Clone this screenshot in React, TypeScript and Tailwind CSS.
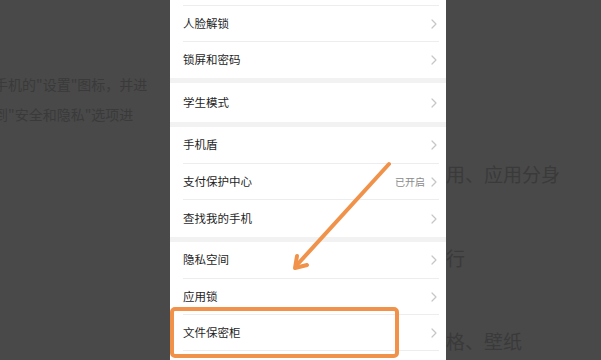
import React from "react";

type Row = { label: string; h: number; value?: string; divider?: boolean };

const sections: Row[][] = [
  [
    { label: "人脸解锁", h: 35, divider: true },
    { label: "锁屏和密码", h: 36 },
  ],
  [{ label: "学生模式", h: 39 }],
  [
    { label: "手机盾", h: 36, divider: true },
    { label: "支付保护中心", h: 35, value: "已开启", divider: true },
    { label: "查找我的手机", h: 37 },
  ],
  [
    { label: "隐私空间", h: 36, divider: true },
    { label: "应用锁", h: 35, divider: true },
    { label: "文件保密柜", h: 35, divider: true },
  ],
];

const Chevron = () => (
  <svg width="6" height="10" viewBox="0 0 6 10" fill="none">
    <path d="M1 1l4 4-4 4" stroke="#c6c6c6" strokeWidth="1.2" strokeLinecap="round" strokeLinejoin="round" />
  </svg>
);

const SettingRow = ({ row }: { row: Row }) => (
  <div className="bg-white">
    <div className="flex items-center pl-[13px] pr-[9px]" style={{ height: row.h }}>
      <span className="flex-1 text-[11.5px] text-[#1f1f1f]">{row.label}</span>
      {row.value && <span className="mr-[6px] text-[10px] text-[#8a8a8a]">{row.value}</span>}
      <Chevron />
    </div>
    {row.divider && <div className="ml-[13px] mr-[7px] h-px bg-[#ededed]" />}
  </div>
);

export default function App() {
  return (
    <div
      className="relative flex h-[360px] w-[601px] overflow-hidden bg-[#494949]"
      style={{ fontFamily: '"Noto Sans CJK SC", "Noto Sans", sans-serif' }}
    >
      {/* background article, dimmed */}
      <div className="w-[170px] shrink-0 overflow-hidden pt-[69px] text-[14px] leading-[30px] text-[#3a3a3a]">
        <div className="-ml-[6px] whitespace-nowrap">手机的"设置"图标，并进</div>
        <div className="-ml-[6px] whitespace-nowrap">到"安全和隐私"选项进</div>
      </div>

      {/* phone screen */}
      <div className="flex w-[276px] shrink-0 flex-col bg-[#f2f2f2]">
        <div className="bg-white">
          <div className="h-[5px]" />
          <div className="ml-[13px] mr-[7px] h-px bg-[#ededed]" />
        </div>
        {sections.map((rows, i) => (
          <div key={i} className={i > 0 ? "mt-[5px]" : ""}>
            {rows.map((r) => (
              <SettingRow key={r.label} row={r} />
            ))}
          </div>
        ))}
        <div className="flex-1 bg-white" />
      </div>

      <div className="flex-1 overflow-hidden pt-[160px] text-[19px] text-[#3a3a3a]">
        <div className="h-[28px] whitespace-nowrap leading-[28px]">用、应用分身</div>
        <div className="mt-[56px] h-[28px] whitespace-nowrap leading-[28px]">行</div>
        <div className="mt-[55px] h-[28px] whitespace-nowrap leading-[28px]">格、壁纸</div>
      </div>

      {/* annotation overlay */}
      <svg className="pointer-events-none absolute inset-0" width="601" height="360" viewBox="0 0 601 360">
        <g stroke="#f0924a" strokeWidth="4" strokeLinecap="round" strokeLinejoin="round" fill="none">
          <line x1="389" y1="164" x2="296" y2="266" />
          <path d="M307 265 L295 268 L297 256" />
        </g>
        <rect x="172" y="309" width="225" height="47" rx="3" fill="none" stroke="#f0924a" strokeWidth="4" />
      </svg>
    </div>
  );
}
